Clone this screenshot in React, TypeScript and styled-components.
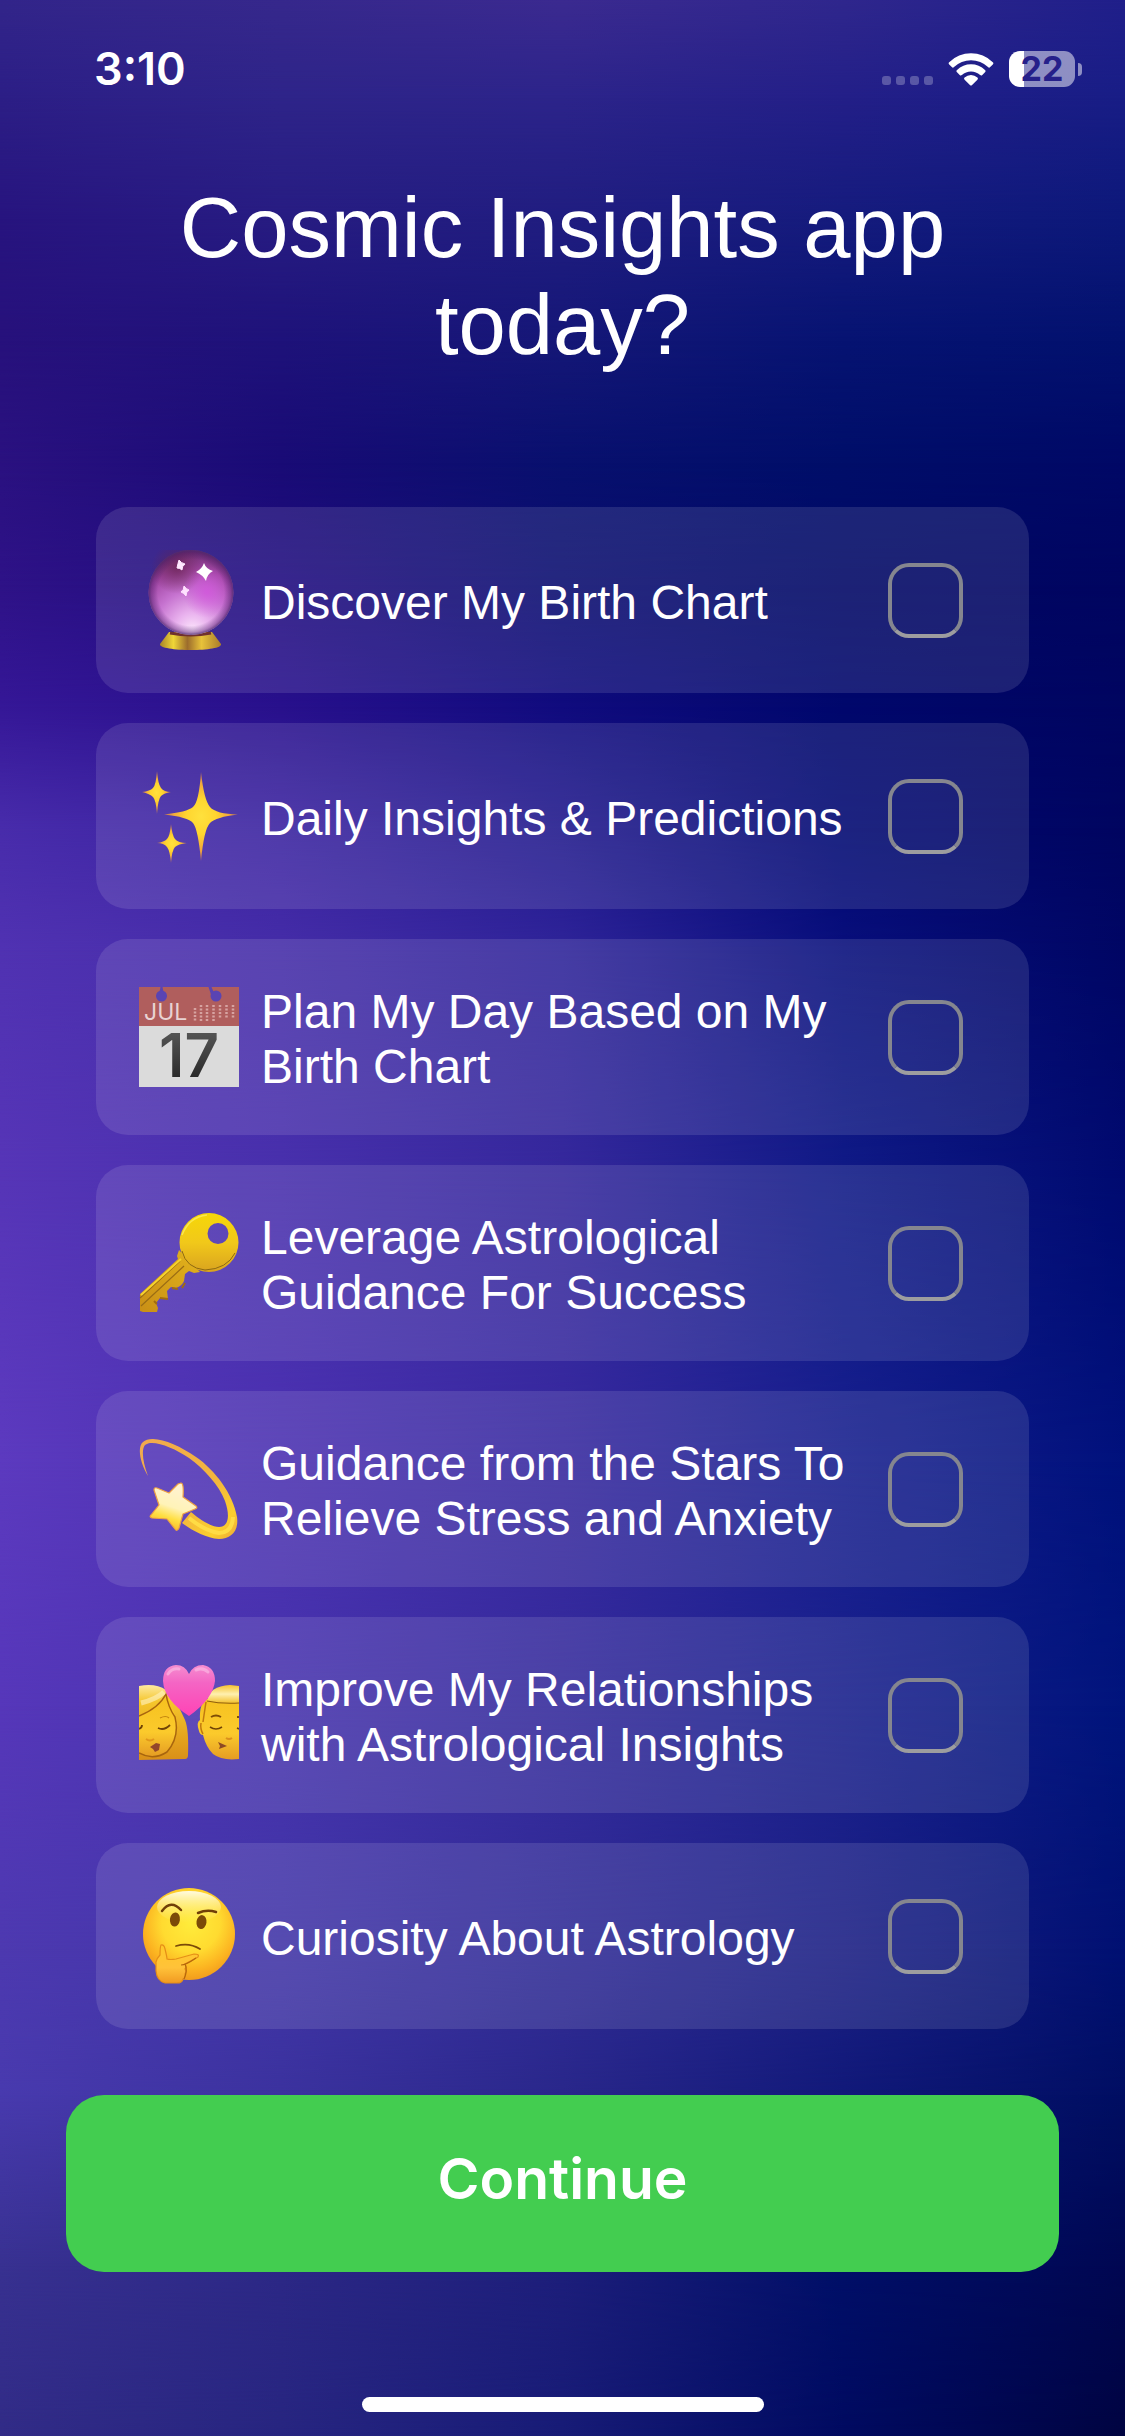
import React, { useState } from "react";
import styled, { createGlobalStyle } from "styled-components";

const TEXT_FONT = `"Helvetica Neue", "Liberation Sans", Arial, sans-serif`;
const UI_FONT = `Inter, "Liberation Sans", sans-serif`;

const GlobalStyle = createGlobalStyle`
  *, *::before, *::after { box-sizing: border-box; }
  body { margin: 0; background: #000a5c; }
`;

/* ---------- Backdrop: rows of colour that fade into each other ---------- */

type Band = { at: number; colors: string[] };

// Each row lists colours at 0, 25, 50, 75 and 100% of the width.
const BANDS: Band[] = [
  { at: 0, colors: ["#32258a", "#36288c", "#3b2a90", "#2f278d", "#201f8a"] },
  { at: 4, colors: ["#2c1e86", "#2e2489", "#2c248a", "#231f88", "#181d86"] },
  { at: 9, colors: ["#27147f", "#271c82", "#201d80", "#151b7d", "#0c187a"] },
  { at: 14, colors: ["#27117c", "#1e127a", "#151777", "#061372", "#02116e"] },
  { at: 19, colors: ["#2a1180", "#190b76", "#08106e", "#000e69", "#000866"] },
  { at: 24, colors: ["#2e1287", "#200c7f", "#0a0d70", "#000766", "#000560"] },
  { at: 29, colors: ["#351797", "#28108c", "#100b7e", "#00076c", "#000560"] },
  { at: 34, colors: ["#482cab", "#3a22a0", "#20188c", "#000872", "#000560"] },
  { at: 39, colors: ["#5032b2", "#452da8", "#2f2499", "#080f7c", "#000664"] },
  { at: 48, colors: ["#5635b7", "#4830ac", "#35289c", "#101a86", "#000a70"] },
  { at: 60, colors: ["#5c3abf", "#4b31b1", "#37299f", "#171f8e", "#00117c"] },
  { at: 70, colors: ["#5637ba", "#4733ad", "#342a9b", "#19208c", "#00147c"] },
  { at: 80, colors: ["#4d39b0", "#4135a7", "#302b96", "#1b1f84", "#001072"] },
  { at: 86, colors: ["#483aae", "#3b329e", "#29278a", "#111979", "#000e62"] },
  { at: 93, colors: ["#383191", "#2c2886", "#1d1e7b", "#000f68", "#000752"] },
  { at: 100, colors: ["#312b86", "#272580", "#171b76", "#000a60", "#000441"] },
];

const Backdrop = styled.div`
  position: absolute;
  inset: 0;
  overflow: hidden;
  z-index: -1;
`;

const ColorBand = styled.div<{ $from: number; $to: number; $colors: string[] }>`
  position: absolute;
  inset: 0;
  background: linear-gradient(90deg, ${(p) => p.$colors.join(", ")});
  mask-image: ${(p) =>
    p.$to > 0
      ? `linear-gradient(180deg, transparent ${p.$from}%, #000 ${p.$to}%)`
      : "none"};
`;

/* ---------- Page ---------- */

const Page = styled.div`
  position: relative;
  z-index: 0;
  min-height: 100vh;
  display: flex;
  flex-direction: column;
  color: #fff;
  font-family: ${TEXT_FONT};
`;

const StatusBar = styled.header`
  display: flex;
  align-items: center;
  justify-content: space-between;
  padding: 51px 43px 0 94px;
  font-family: ${UI_FONT};
`;

const Clock = styled.time`
  font-size: 45px;
  line-height: 36px;
  font-weight: 600;
`;

const StatusIcons = styled.div`
  display: flex;
  align-items: center;
  gap: 15px;
`;

const SignalDots = styled.div`
  display: flex;
  align-self: flex-end;
  gap: 5px;
  padding-bottom: 2px;
`;

const SignalDot = styled.span`
  width: 9px;
  height: 9px;
  border-radius: 3px;
  background: rgba(255, 255, 255, 0.25);
`;

const Battery = styled.div`
  display: flex;
  align-items: center;
  gap: 3px;
`;

const BatteryBody = styled.div<{ $level: number }>`
  width: 66px;
  height: 36px;
  border-radius: 11px;
  display: grid;
  place-items: center;
  font-size: 34px;
  line-height: 36px;
  font-weight: 700;
  color: #26208a;
  background: linear-gradient(
    90deg,
    #fff ${(p) => p.$level}%,
    rgba(255, 255, 255, 0.5) ${(p) => p.$level}%
  );
`;

const BatteryTip = styled.span`
  width: 4px;
  height: 13px;
  border-radius: 0 4px 4px 0;
  background: rgba(255, 255, 255, 0.5);
`;

const Main = styled.main`
  flex: 1;
  display: flex;
  flex-direction: column;
  padding: 92px 66px 0;
`;

const Title = styled.h1`
  margin: 0;
  padding: 0 90px;
  font-size: 85px;
  line-height: 97px;
  font-weight: 400;
  text-align: center;
`;

const OptionList = styled.ul`
  list-style: none;
  margin: 134px 0 66px;
  padding: 0 30px;
  display: flex;
  flex-direction: column;
  gap: 30px;
`;

const OptionCard = styled.label`
  display: flex;
  align-items: center;
  gap: 22px;
  padding: 43px 66px 43px 43px;
  border-radius: 32px;
  background: rgba(255, 255, 255, 0.11);
  cursor: pointer;
`;

const OptionIcon = styled.svg`
  flex: none;
  width: 100px;
  height: 100px;
`;

const CalendarPage = styled(OptionIcon)`
  overflow: visible;
`;

const OptionText = styled.span`
  flex: 1;
  margin: 2px 0 -2px;
  font-size: 48px;
  line-height: 55px;
`;

const Checkbox = styled.input`
  appearance: none;
  flex: none;
  width: 75px;
  height: 75px;
  margin: 0;
  border: 4px solid #85868f;
  border-bottom-color: #9d9d9f;
  border-radius: 21px;
  cursor: pointer;

  &:checked {
    background: #43cd50;
  }
`;

const ContinueButton = styled.button`
  width: 100%;
  padding: 48px 0 57px;
  border: 0;
  border-radius: 38px;
  background: #43cd50;
  color: #fff;
  font-family: ${UI_FONT};
  font-size: 57px;
  line-height: 72px;
  font-weight: 600;
  cursor: pointer;
`;

const HomeIndicator = styled.div`
  width: 402px;
  height: 15px;
  margin: 72px auto 24px;
  border-radius: 8px;
  background: #fff;
`;

/* ---------- Icons ---------- */

const WifiIcon = () => (
  <svg width="46" height="34" viewBox="0 0 46 34" fill="#fff" aria-hidden="true">
    <path d="M1.2 10.2a31 31 0 0 1 43.6 0c.8.8.8 1.5 0 2.3l-2.6 2.6c-.8.8-1.5.7-2.2 0a24.500 24.500 0 0 0-34 0c-.7.7-1.400.8-2.200 0l-2.600-2.600c-.8-.8-.8-1.500 0-2.300z" />
    <path d="M9 18a20 20 0 0 1 28 0c.8.8.7 1.500 0 2.200l-2.700 2.700c-.8.8-1.400.7-2.200.1a13.400 13.400 0 0 0-18.200 0c-.8.6-1.400.7-2.200-.1L9 20.200c-.7-.7-.8-1.400 0-2.200z" />
    <path d="M16.600 25.600a9.300 9.300 0 0 1 12.800 0c.7.7.7 1.400 0 2.100l-5.300 5.200c-.8.8-1.400.8-2.200 0l-5.300-5.200c-.7-.7-.7-1.400 0-2.100z" />
  </svg>
);

const CrystalBallIcon = () => (
  <OptionIcon viewBox="0 0 100 100" aria-hidden="true">
    <defs>
      <radialGradient id="ball" cx="52%" cy="94%" r="92%">
        <stop offset="0" stopColor="#fbe3fb" />
        <stop offset=".22" stopColor="#e9b2ee" />
        <stop offset=".5" stopColor="#c673d0" />
        <stop offset=".78" stopColor="#a146a4" />
        <stop offset="1" stopColor="#6d2f72" />
      </radialGradient>
      <radialGradient id="ballEdge" cx="50%" cy="50%" r="50%">
        <stop offset=".78" stopColor="#4a1a68" stopOpacity="0" />
        <stop offset=".93" stopColor="#4a1a68" stopOpacity=".4" />
        <stop offset="1" stopColor="#4a2a6e" stopOpacity=".8" />
      </radialGradient>
      <radialGradient id="ballGlow">
        <stop offset="0" stopColor="#d355dd" stopOpacity=".8" />
        <stop offset="1" stopColor="#d355dd" stopOpacity="0" />
      </radialGradient>
      <radialGradient id="ballShade">
        <stop offset="0" stopColor="#67234f" stopOpacity=".75" />
        <stop offset="1" stopColor="#67234f" stopOpacity="0" />
      </radialGradient>
      <linearGradient id="stand" x1="0" x2="1">
        <stop offset="0" stopColor="#a8822a" />
        <stop offset=".22" stopColor="#f0d637" />
        <stop offset=".45" stopColor="#9c6c2c" />
        <stop offset=".68" stopColor="#e8c23a" />
        <stop offset="1" stopColor="#a97c2c" />
      </linearGradient>
    </defs>
    <path d="M30 82h43l9 12c1 4-14 6-30 6s-32-2-31-6z" fill="url(#stand)" />
    <path d="M31 83q21 4 41 0" stroke="#70302e" strokeWidth="3" fill="none" />
    <circle cx="52" cy="42.500" r="42.500" fill="url(#ball)" />
    <ellipse cx="38" cy="18" rx="26" ry="26" fill="url(#ballShade)" />
    <ellipse cx="68" cy="42" rx="24" ry="26" fill="url(#ballGlow)" />
    <circle cx="52" cy="42.500" r="42.500" fill="url(#ballEdge)" />
    <path d="M65 13q2 6 9 8-6 3-7 10-3-6-10-9 6-3 8-9z" fill="#fff" />
    <path d="M40 10q2 3 6 4-3 2-3 6-2-2-5-2 1-5 2-8z" fill="#ffe9ff" stroke="#ffe9ff" />
    <path d="M45 36q2 3 5 4-3 2-3 6-2-3-5-4 3-2 3-6z" fill="#ffe1ff" stroke="#ffe1ff" />
  </OptionIcon>
);

const SparklesIcon = () => (
  <OptionIcon viewBox="0 0 100 100" aria-hidden="true">
    <defs>
      <radialGradient id="spark">
        <stop offset="0" stopColor="#ffe13d" />
        <stop offset=".4" stopColor="#ffd52f" />
        <stop offset=".75" stopColor="#f2a83c" />
        <stop offset="1" stopColor="#b9705a" />
      </radialGradient>
    </defs>
    <g fill="url(#spark)">
      <path d="M62 6Q65 34 71 41T99 48.500Q77 51 71 57T62 95Q59 63 54 57T25 48.500Q48 46 54 41T62 6z" />
      <path d="M18 5Q19 18 22 22T32 26Q25 27 22 30T18 48Q17 34 14 31T3 26Q11 25 14 22T18 5z" />
      <path d="M32 58Q33 69 36 73T48 77Q39 78 36 81T32 97Q31 85 28 81T18 77Q25 76 28 73T32 58z" />
    </g>
  </OptionIcon>
);

const CalendarIcon = () => (
  <CalendarPage viewBox="0 0 100 100" aria-hidden="true">
    <defs>
      <linearGradient id="dayInk" x1="0" y1="0" x2="0" y2="1">
        <stop offset="0" stopColor="#616161" />
        <stop offset="1" stopColor="#1e1e1e" />
      </linearGradient>
    </defs>
    <rect width="100" height="100" fill="#dbdbdb" />
    <rect width="100" height="39" fill="#b05e5d" />
    <path d="M21.500 0h2l1 5h-4zM69.500 0h3l3 7-3 2z" fill="#5a44b3" />
    <circle cx="22.500" cy="9" r="5.500" fill="#5a44b3" />
    <circle cx="77" cy="9" r="5.500" fill="#5a44b3" />
    <text x="5" y="33" fontFamily="Inter, sans-serif" fontSize="23" fill="#e8d3d3">
      JUL
    </text>
    <path
      d="M56 21v13M62 18v16M68 18v16M74.500 18v16M81 18v13M87.500 18v13M94 18v13"
      stroke="#d6a3a1"
      strokeWidth="2.500"
      strokeDasharray="2 1.500"
    />
    <text x="50" y="90" textAnchor="middle" fontFamily="Inter, sans-serif" fontSize="60" fontWeight="600" fill="url(#dayInk)">
      17
    </text>
  </CalendarPage>
);

const KeyIcon = () => (
  <OptionIcon viewBox="0 0 100 100" aria-hidden="true">
    <defs>
      <linearGradient id="keyBow" x1="0" y1="0" x2="0" y2="1">
        <stop offset="0" stopColor="#f6d708" />
        <stop offset=".5" stopColor="#f1c81a" />
        <stop offset="1" stopColor="#d9a31f" />
      </linearGradient>
      <linearGradient id="keyBlade" x1="1" y1="0" x2="0" y2="1">
        <stop offset="0" stopColor="#e3b41c" />
        <stop offset="1" stopColor="#c98f16" />
      </linearGradient>
    </defs>
    <path
      d="M40 37l-2 6 1 3L1 81v17l3 1h14l1-4-2-5 4-5 8 1-1-8 4-4 5 1q6-2 8-7l1-7 4-3 5 2 6-1z"
      fill="url(#keyBlade)"
    />
    <path d="M41 48L1 85M45 53L2 93" stroke="#9a6c14" strokeWidth="1.200" fill="none" />
    <path d="M42 46L2 82" stroke="#f6d32d" strokeWidth="2" fill="none" />
    <path d="M18 91l-3-3M29 86l-8-1M39 76l-6-1M46 70l-3 5" stroke="#a06c10" strokeWidth="2" />
    <path
      fillRule="evenodd"
      d="M70 0a29.500 29.500 0 1 1 0 59 29.500 29.500 0 0 1 0-59zM79 10a10.500 10.500 0 1 0 0 21 10.500 10.500 0 0 0 0-21z"
      fill="url(#keyBow)"
    />
    <path d="M43 38Q47 55 66 57 88 56 96 40" stroke="#8d6912" strokeWidth="1" fill="none" />
    <path d="M43 22Q50 4 68 2" stroke="#fbe84e" strokeWidth="1.500" fill="none" />
  </OptionIcon>
);

const ShootingStarIcon = () => (
  <OptionIcon viewBox="0 0 100 100" aria-hidden="true">
    <defs>
      <linearGradient id="trail" x1="0" y1="0" x2="1" y2="1">
        <stop offset="0" stopColor="#f0a94f" />
        <stop offset=".6" stopColor="#f3b63d" />
        <stop offset=".85" stopColor="#fbcf2d" />
        <stop offset="1" stopColor="#eda53a" />
      </linearGradient>
      <linearGradient id="star" x1=".6" y1=".1" x2=".3" y2="1">
        <stop offset="0" stopColor="#fff3cf" />
        <stop offset=".45" stopColor="#fff3b8" />
        <stop offset=".7" stopColor="#ffdf43" />
        <stop offset="1" stopColor="#f5b323" />
      </linearGradient>
    </defs>
    <path
      d="M9 37C1 24-2 8 4 3 13-5 37 4 57 18 76 31 94 55 98 78 100 92 92 100 80 100 67 99 54 92 43 84L52 73C60 80 72 88 80 88 90 88 91 76 86 62 80 46 65 30 50 19 34 8 13 0 6 6 2 11 4 24 9 37z"
      fill="url(#trail)"
    />
    <path d="M50 79Q66 92 80 94 93 94 94 78" stroke="#ffdc45" strokeWidth="4" fill="none" />
    <path
      d="M42 44q3 0 2 14l13 9q2 2-1 3l-12 5-4 14q-2 4-4 1l-8-10-15-1q-3-1-1-3l8-10-5-15q0-3 3-2l12 5 9-9z"
      fill="url(#star)"
      stroke="#eda044"
      strokeWidth="1.200"
      strokeLinejoin="round"
    />
  </OptionIcon>
);

const KissIcon = () => (
  <OptionIcon viewBox="0 0 100 100" aria-hidden="true">
    <defs>
      <linearGradient id="hairW" x1="0" y1="0" x2="0" y2="1">
        <stop offset="0" stopColor="#fde9a0" />
        <stop offset=".22" stopColor="#f5c62c" />
        <stop offset=".75" stopColor="#e2a01c" />
        <stop offset="1" stopColor="#d98f19" />
      </linearGradient>
      <linearGradient id="hairM" x1="0" y1="0" x2="0" y2="1">
        <stop offset="0" stopColor="#f5c32f" />
        <stop offset=".5" stopColor="#fff0b0" />
        <stop offset="1" stopColor="#f3c02b" />
      </linearGradient>
      <linearGradient id="skin" x1="0" y1="0" x2="0" y2="1">
        <stop offset="0" stopColor="#f6c11e" />
        <stop offset=".6" stopColor="#fbca2c" />
        <stop offset="1" stopColor="#e59c23" />
      </linearGradient>
      <linearGradient id="heart" x1="0" y1="0" x2="0" y2="1">
        <stop offset="0" stopColor="#f58dd0" />
        <stop offset=".35" stopColor="#f465c4" />
        <stop offset="1" stopColor="#ff43b5" />
      </linearGradient>
    </defs>
    <path d="M0 21Q17 18 27 25 38 36 46 55 50 65 49 90 49 94 46 94L0 95z" fill="url(#hairW)" />
    <path d="M0 51Q20 43 28 30 34 42 38 56 39 76 28 87 14 96 0 88z" fill="url(#skin)" />
    <path d="M0 51Q20 43 27 29 29 42 36 52 41 72 28 87 14 96 0 88" stroke="#a8650e" strokeWidth="1.500" fill="none" />
    <path d="M2 38Q18 34 25 27" stroke="#fff3c5" strokeWidth="5" fill="none" opacity=".6" />
    <path d="M19 63q6 3 12-3M0 64q3-1 3-4" stroke="#704306" strokeWidth="1.800" fill="none" />
    <path d="M21 53q6-3 9 0" stroke="#c4860f" strokeWidth="1.200" fill="none" />
    <path d="M7 74q4 3 8 0" stroke="#e1981b" strokeWidth="2" fill="none" />
    <path d="M11 82l6-4 4 1-1 6-4 2-2-3z" fill="#93462b" />
    <path d="M68 34Q60 38 61 55 57 57 60 66 61 70 64 70 67 82 74 89 83 96 100 94V30z" fill="url(#skin)" />
    <path d="M67 37q-2 13-3 20M62 58q-1 6 2 11" stroke="#c1790f" strokeWidth="1.500" fill="none" />
    <path d="M68 36Q70 21 91 20L100 21V38Q82 39 68 36z" fill="url(#hairM)" />
    <path d="M68 36Q82 39 100 38" stroke="#8f5e0f" strokeWidth="1.200" fill="none" />
    <path d="M72 52q5-3 10 0M98 52h2" stroke="#7f4d06" strokeWidth="2" fill="none" />
    <path d="M71 62q6 4 12 0M98 63l2 1" stroke="#704306" strokeWidth="1.600" fill="none" />
    <path d="M87 73q3 2 6 0" stroke="#db901c" strokeWidth="2" fill="none" />
    <path d="M79 77l9 4-8 3 1-3z" fill="#8d4925" />
    <path d="M50 51Q25 35 24 16 24 1 37 0 46 0 50 9 54 0 64 0 76 2 76 16 74 34 50 51z" fill="url(#heart)" />
    <path d="M29 9Q33 3 40 4M57 5q7-3 12 2" stroke="#fbb7e3" strokeWidth="3" strokeLinecap="round" fill="none" opacity=".7" />
  </OptionIcon>
);

const ThinkingIcon = () => (
  <OptionIcon viewBox="0 0 100 100" aria-hidden="true">
    <defs>
      <radialGradient id="face" cx="52%" cy="38%" r="63%">
        <stop offset="0" stopColor="#ffec3b" />
        <stop offset=".5" stopColor="#ffdb30" />
        <stop offset=".8" stopColor="#fcb421" />
        <stop offset="1" stopColor="#f19a1c" />
      </radialGradient>
      <linearGradient id="shine" x1="0" y1="0" x2="0" y2="1">
        <stop offset="0" stopColor="#fffbe0" />
        <stop offset="1" stopColor="#fff27a" stopOpacity="0" />
      </linearGradient>
      <linearGradient id="hand" x1="0" y1="0" x2="0" y2="1">
        <stop offset="0" stopColor="#ffc928" />
        <stop offset=".6" stopColor="#ffc239" />
        <stop offset="1" stopColor="#f19a22" />
      </linearGradient>
    </defs>
    <circle cx="50" cy="48" r="46" fill="url(#face)" />
    <ellipse cx="50" cy="21" rx="32" ry="16" fill="url(#shine)" />
    <path d="M23 25Q32 13 42 24M59 27Q68 23 77 26" stroke="#703f08" strokeWidth="2.500" strokeLinecap="round" fill="none" />
    <ellipse cx="36" cy="33.500" rx="5" ry="7" fill="#7b4a08" transform="rotate(8 36 33)" />
    <ellipse cx="62.500" cy="36" rx="5" ry="7" fill="#7b4a08" transform="rotate(8 62 36)" />
    <path d="M37 60Q50 56 61 63" stroke="#7b4a08" strokeWidth="1.800" strokeLinecap="round" fill="none" />
    <path
      d="M22 59q3-1 4 4 2 8 2 10 3 1 9 0l18-5q6 0 4 3l-13 7q2 3 0 5 2 3 0 5 1 4-2 5-1 4-6 4H26q-8-2-9-12V76q1-4 4-7 0-8 1-10z"
      fill="url(#hand)"
      stroke="#e58e17"
      strokeWidth="1.200"
    />
    <path d="M42 79q5 0 15-7M46 78q3 6-1 15" stroke="#b5660c" strokeWidth="1.200" fill="none" />
  </OptionIcon>
);

/* ---------- App ---------- */

const OPTIONS = [
  { id: "birth-chart", label: "Discover My Birth Chart", Icon: CrystalBallIcon },
  { id: "daily", label: "Daily Insights & Predictions", Icon: SparklesIcon },
  { id: "plan", label: "Plan My Day Based on My Birth Chart", Icon: CalendarIcon },
  { id: "success", label: "Leverage Astrological Guidance For Success", Icon: KeyIcon },
  { id: "stress", label: "Guidance from the Stars To Relieve Stress and Anxiety", Icon: ShootingStarIcon },
  { id: "relationships", label: "Improve My Relationships with Astrological Insights", Icon: KissIcon },
  { id: "curiosity", label: "Curiosity About Astrology", Icon: ThinkingIcon },
];

export default function App() {
  const [selected, setSelected] = useState<string[]>([]);

  const toggle = (id: string) =>
    setSelected((ids) =>
      ids.includes(id) ? ids.filter((other) => other !== id) : [...ids, id]
    );

  return (
    <Page>
      <GlobalStyle />
      <Backdrop aria-hidden="true">
        {BANDS.map((band, i) => (
          <ColorBand
            key={band.at}
            $from={i > 0 ? BANDS[i - 1].at : 0}
            $to={band.at}
            $colors={band.colors}
          />
        ))}
      </Backdrop>

      <StatusBar>
        <Clock>3:10</Clock>
        <StatusIcons>
          <SignalDots>
            <SignalDot />
            <SignalDot />
            <SignalDot />
            <SignalDot />
          </SignalDots>
          <WifiIcon />
          <Battery>
            <BatteryBody $level={22}>22</BatteryBody>
            <BatteryTip />
          </Battery>
        </StatusIcons>
      </StatusBar>

      <Main>
        <Title>Cosmic Insights app today?</Title>
        <OptionList>
          {OPTIONS.map(({ id, label, Icon }) => (
            <li key={id}>
              <OptionCard htmlFor={id}>
                <Icon />
                <OptionText>{label}</OptionText>
                <Checkbox
                  type="checkbox"
                  id={id}
                  checked={selected.includes(id)}
                  onChange={() => toggle(id)}
                />
              </OptionCard>
            </li>
          ))}
        </OptionList>
        <ContinueButton type="button">Continue</ContinueButton>
      </Main>

      <HomeIndicator />
    </Page>
  );
}
